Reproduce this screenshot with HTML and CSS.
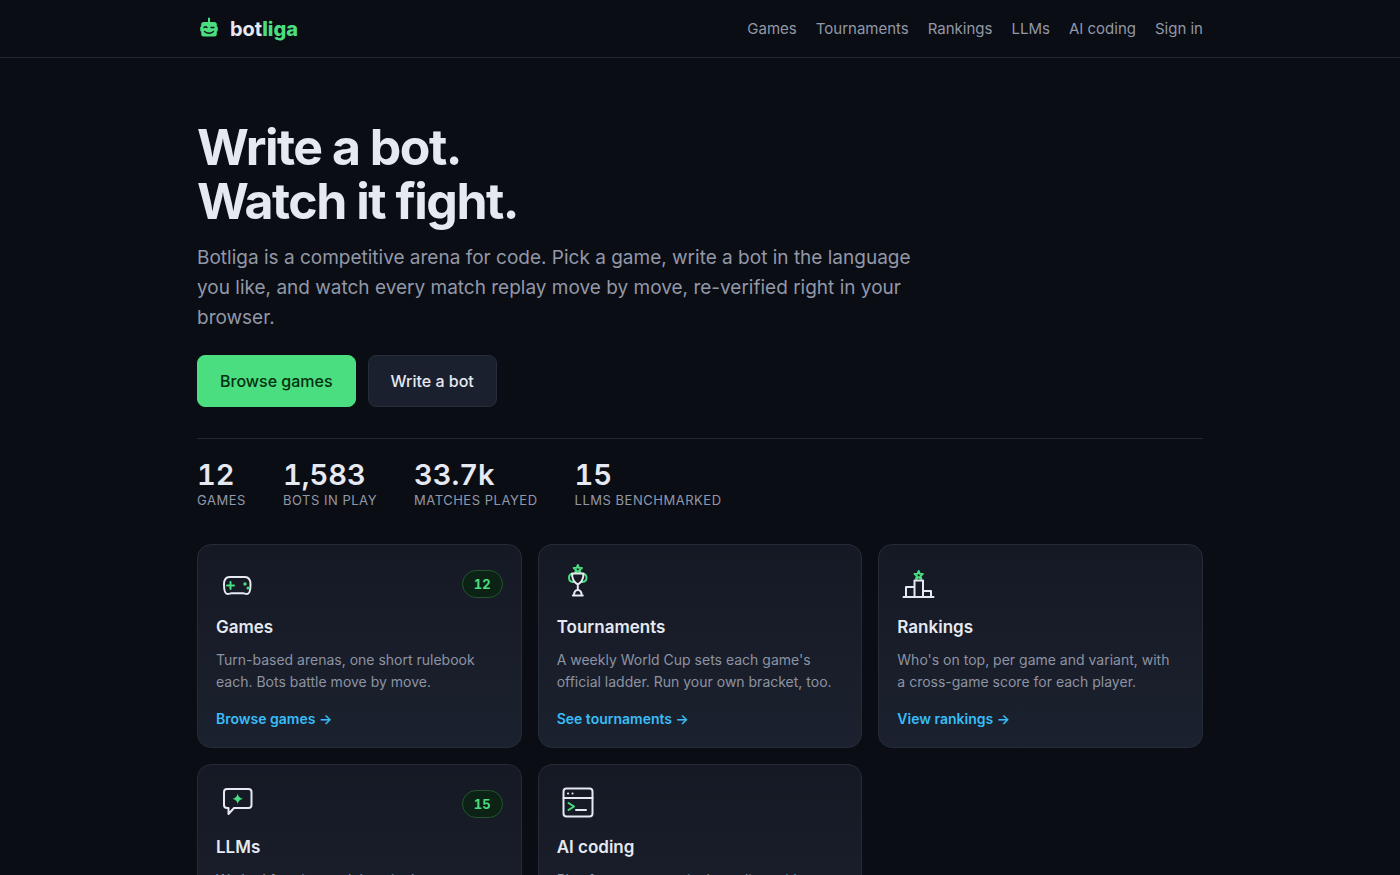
FILE: index.html
```html
<!DOCTYPE html>
<html lang="en">
<head>
<meta charset="utf-8">
<meta name="viewport" content="width=device-width, initial-scale=1">
<title>Botliga</title>
<link rel="stylesheet" href="styles.css">
</head>
<body>
<header class="site-header">
  <div class="container header-row">
    <a class="brand" href="#">
      <svg class="brand-mark" viewBox="0 0 24 24" aria-hidden="true">
        <path d="M12 .8v6" stroke="#4ade80" stroke-width="2"/>
        <rect x="3.200" y="9.500" width="17.600" height="5" rx="1" fill="#4ade80"/>
        <rect x="4.200" y="5" width="15.600" height="14.500" rx="2.500" fill="#4ade80"/>
        <path d="M7 10.500q1.500-1.500 3 0M14 10.500h3M7.500 14.500q4.500 3.500 9 0" fill="none" stroke="#0b0e14" stroke-width="1.300" stroke-linecap="round"/>
      </svg>
      <span>bot<span class="brand-accent">liga</span></span>
    </a>
    <nav class="nav" aria-label="Main">
      <a href="#">Games</a>
      <a href="#">Tournaments</a>
      <a href="#">Rankings</a>
      <a href="#">LLMs</a>
      <a href="#">AI coding</a>
      <a href="#">Sign in</a>
    </nav>
  </div>
</header>
<main class="container">
  <section class="hero">
    <h1>Write a bot.<br>Watch it fight.</h1>
    <p class="lead">Botliga is a competitive arena for code. Pick a game, write a bot in the language you like, and watch every match replay move by move, re-verified right in your browser.</p>
    <div class="actions">
      <button class="btn btn-primary" type="button">Browse games</button>
      <button class="btn" type="button">Write a bot</button>
    </div>
  </section>
  <dl class="stats">
    <div class="stat"><dt>Games</dt><dd>12</dd></div>
    <div class="stat"><dt>Bots in play</dt><dd>1,583</dd></div>
    <div class="stat"><dt>Matches played</dt><dd>33.7k</dd></div>
    <div class="stat"><dt>LLMs benchmarked</dt><dd>15</dd></div>
  </dl>
  <section class="cards">
    <article class="card">
      <div class="card-top">
        <svg class="icon" viewBox="0 0 44 44" aria-hidden="true">
          <path d="M13.500 15h15.500c4 0 5.500 3 5.500 7.500 0 6-1 9.500-3.500 9.500-1.800 0-2.500-.8-4-.8h-11.500c-1.500 0-2.200.8-4 .8-2.500 0-3.500-3.500-3.500-9.500 0-4.500 1.500-7.500 5.500-7.500z"/>
          <path class="green" d="M14.500 20v7M11 23.500h7"/>
          <circle class="green-fill" cx="29" cy="22" r="1.700"/><circle class="green-fill" cx="32" cy="26" r="1.500"/>
        </svg>
        <span class="badge">12</span>
      </div>
      <h2>Games</h2>
      <p>Turn-based arenas, one short rulebook each. Bots battle move by move.</p>
      <a class="more" href="#">Browse games →</a>
    </article>
    <article class="card">
      <div class="card-top">
        <svg class="icon" viewBox="0 0 44 44" aria-hidden="true">
          <path class="green" d="M15.500 12c-4.500-.8-5 7.500.5 8h1.500M26 12c4.500-.8 5 7.500-.5 8h-1.500"/>
          <path class="green" d="M20.800 3l1.100 2.800 3 .2-2.300 1.900.8 2.900-2.600-1.600-2.600 1.600.8-2.900-2.300-1.900 3-.2z"/>
          <path d="M15 11.500h11.500c0 5.500-2 9-5.700 11-3.700-2-5.800-5.500-5.800-11zM20.800 22.500v5.500M17 33.500q0-5.500 3.800-5.500t3.800 5.500M15.800 33.500h10"/>
        </svg>
      </div>
      <h2>Tournaments</h2>
      <p>A weekly World Cup sets each game's official ladder. Run your own bracket, too.</p>
      <a class="more" href="#">See tournaments →</a>
    </article>
    <article class="card">
      <div class="card-top">
        <svg class="icon" viewBox="0 0 44 44" aria-hidden="true">
          <path class="green" d="M21.700 9l1.100 2.800 3 .2-2.300 1.900.8 2.900-2.600-1.600-2.600 1.600.8-2.900-2.300-1.900 3-.2z"/>
          <path d="M6.500 35h30M9 35v-10h8.500M17.500 35v-16.500h8.500v16.500M26 29h8v6"/>
        </svg>
      </div>
      <h2>Rankings</h2>
      <p>Who's on top, per game and variant, with a cross-game score for each player.</p>
      <a class="more" href="#">View rankings →</a>
    </article>
    <article class="card">
      <div class="card-top">
        <svg class="icon" viewBox="0 0 44 44" aria-hidden="true">
          <path d="M11 7h21.500a3 3 0 0 1 3 3v13a3 3 0 0 1-3 3h-14.500l-5.500 6v-6h-1.500a3 3 0 0 1-3-3v-13a3 3 0 0 1 3-3z"/>
          <path class="green-fill" d="M21.700 11.500q.8 4.500 5.300 5.300-4.500.8-5.300 5.300-.8-4.500-5.300-5.300 4.500-.8 5.300-5.300z"/>
        </svg>
        <span class="badge">15</span>
      </div>
      <h2>LLMs</h2>
      <p>We had frontier models write bots across every game, then ranked the results.</p>
      <a class="more" href="#">See LLMs →</a>
    </article>
    <article class="card">
      <div class="card-top">
        <svg class="icon" viewBox="0 0 44 44" aria-hidden="true">
          <rect x="6.500" y="6.500" width="29" height="28" rx="3"/>
          <path d="M6.500 16h29M19 28h10M11 11.500h.1M15.500 11.500h.1"/>
          <path class="green" d="M11.500 21l5.500 3.500-5.500 3.500"/>
        </svg>
      </div>
      <h2>AI coding</h2>
      <p>Play from your terminal or editor with your own AI agent.</p>
      <a class="more" href="#">Start coding →</a>
    </article>
  </section>
</main>
</body>
</html>
```
FILE: styles.css
```css
* { box-sizing: border-box; }
html { background: #0a0d14; scrollbar-width: none; }
body {
  margin: 0;
  color: #e6e9f2;
  font-family: Inter, "Liberation Sans", sans-serif;
  font-size: 15px;
  line-height: 22px;
}
a { color: inherit; text-decoration: none; }
.container { max-width: 1054px; margin: 0 auto; padding: 0 24px; }
.site-header { border-bottom: 1px solid #232834; }
.header-row { display: flex; align-items: center; justify-content: space-between; height: 57px; }
.brand { display: flex; align-items: center; gap: 9px; font-size: 20px; font-weight: 700; }
.brand-mark { width: 24px; height: 24px; }
.brand-accent { color: #4ade80; font-weight: 800; }
.nav { display: flex; gap: 19px; color: #9298a8; }
.hero { padding: 62px 0 31px; }
h1 { margin: 0; font-size: 50px; line-height: 54px; font-weight: 700; letter-spacing: -0.03em; }
.lead { max-width: 720px; margin: 15px 0 22px; color: #9298a8; font-size: 19px; line-height: 30px; }
.actions { display: flex; gap: 12px; }
.btn {
  height: 52px; padding: 0 22px;
  border: 1px solid #262d3b; border-radius: 8px;
  background: #1a202d; color: #e6e9f2;
  font: 500 16px/24px Inter, "Liberation Sans", sans-serif;
}
.btn-primary { background: #4ade80; border-color: #4ade80; color: #05300f; }
.stats { display: flex; flex-wrap: wrap; gap: 37px; margin: 0; padding: 19px 0 35px; border-top: 1px solid #232834; }
.stat { display: flex; flex-direction: column-reverse; }
.stat dt { color: #9298a8; font-size: 13px; line-height: 18px; letter-spacing: 0.04em; text-transform: uppercase; }
.stat dd { margin: 0; font-size: 29px; line-height: 33px; font-weight: 600; font-variant-numeric: tabular-nums; }
.cards { display: grid; grid-template-columns: repeat(3, 1fr); gap: 16px; }
.card {
  padding: 18px 18px 17px;
  border: 1px solid #262b38; border-radius: 14px;
  background: linear-gradient(#151924, #1b212e);
}
.card-top { display: flex; align-items: center; justify-content: space-between; height: 42px; }
.icon { width: 44px; height: 44px; fill: none; stroke: #e6e9f2; stroke-width: 2; stroke-linecap: round; stroke-linejoin: round; }
.icon .green { stroke: #4ade80; }
.icon .green-fill { fill: #4ade80; stroke: none; }
.badge {
  padding: 2px 11px; border: 1px solid #22542f; border-radius: 14px;
  background: #0c2215; color: #4ade80; font-size: 13px; font-weight: 700;
  font-variant-numeric: tabular-nums;
}
.card h2 { margin: 10px 0; font-size: 17px; line-height: 24px; font-weight: 600; }
.card p { margin: 0 0 15px; padding-right: 6px; color: #8d93a3; font-size: 14px; }
.more { color: #38bdf8; font-size: 14px; font-weight: 600; }
```
